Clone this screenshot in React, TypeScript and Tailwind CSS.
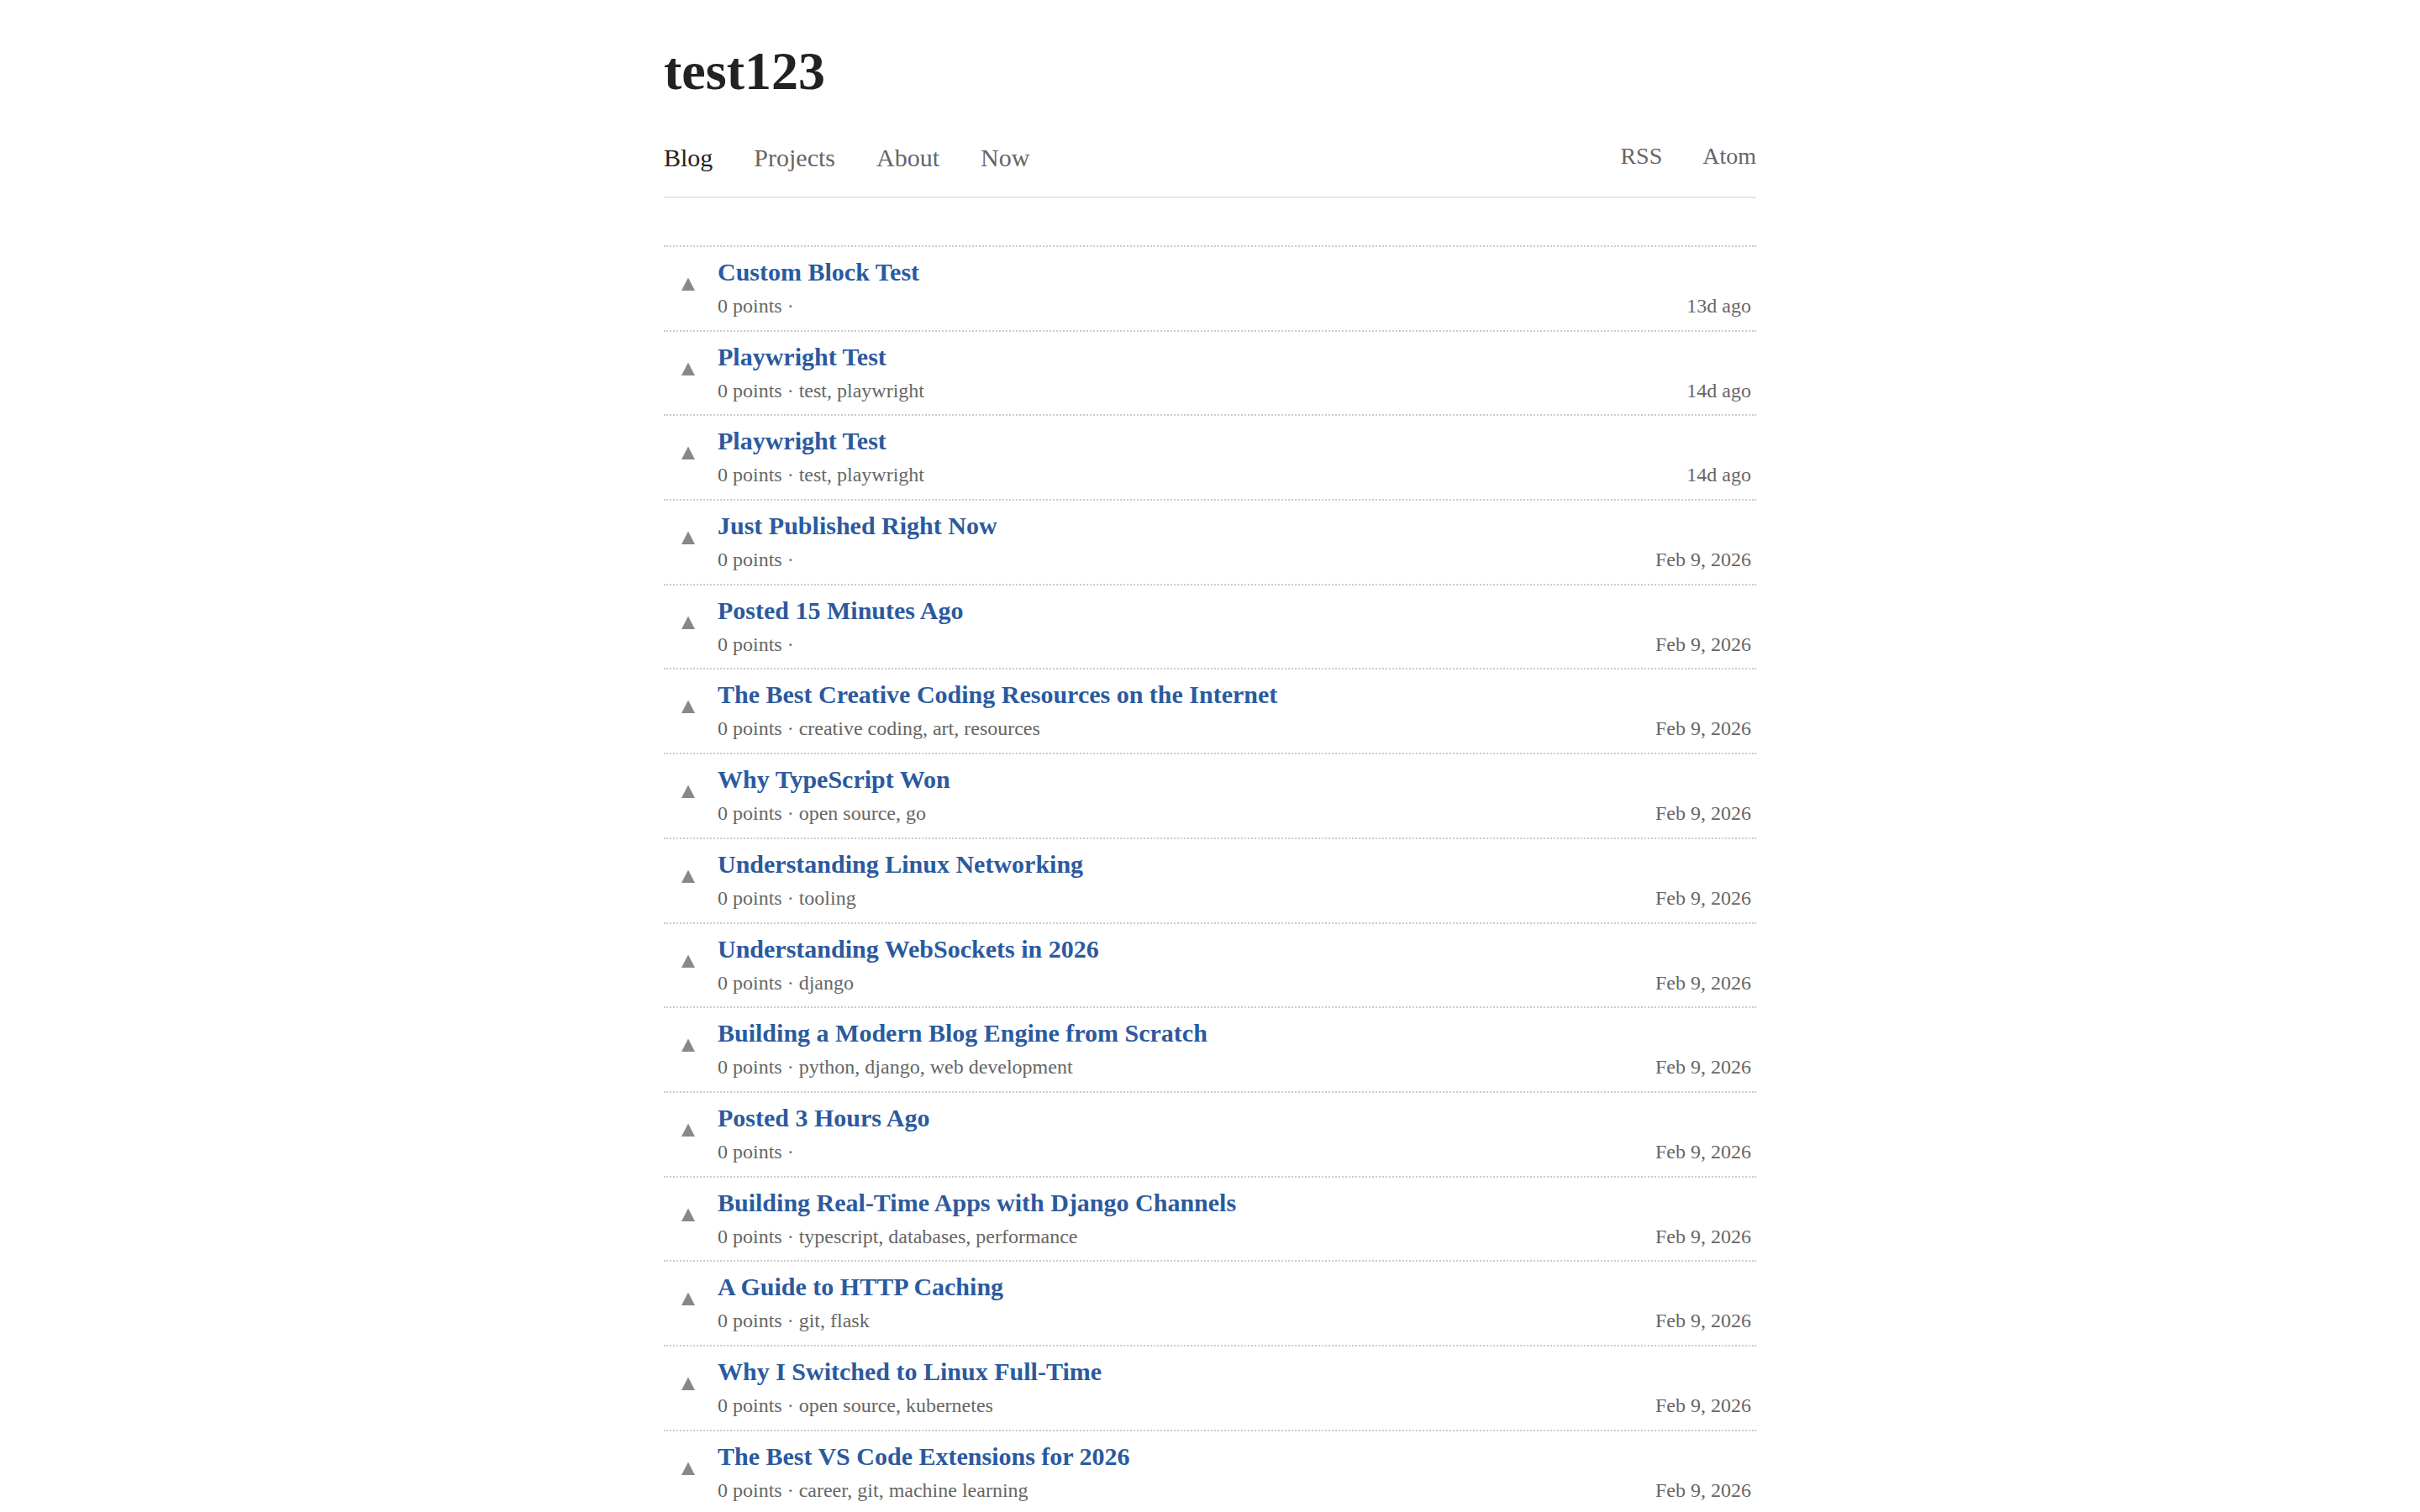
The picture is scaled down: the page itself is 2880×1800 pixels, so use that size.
type Post = {
  title: string;
  points: number;
  tags: string[];
  date: string;
};

const posts: Post[] = [
  { title: 'Custom Block Test', points: 0, tags: [], date: '13d ago' },
  { title: 'Playwright Test', points: 0, tags: ['test', 'playwright'], date: '14d ago' },
  { title: 'Playwright Test', points: 0, tags: ['test', 'playwright'], date: '14d ago' },
  { title: 'Just Published Right Now', points: 0, tags: [], date: 'Feb 9, 2026' },
  { title: 'Posted 15 Minutes Ago', points: 0, tags: [], date: 'Feb 9, 2026' },
  {
    title: 'The Best Creative Coding Resources on the Internet',
    points: 0,
    tags: ['creative coding', 'art', 'resources'],
    date: 'Feb 9, 2026',
  },
  { title: 'Why TypeScript Won', points: 0, tags: ['open source', 'go'], date: 'Feb 9, 2026' },
  { title: 'Understanding Linux Networking', points: 0, tags: ['tooling'], date: 'Feb 9, 2026' },
  { title: 'Understanding WebSockets in 2026', points: 0, tags: ['django'], date: 'Feb 9, 2026' },
  {
    title: 'Building a Modern Blog Engine from Scratch',
    points: 0,
    tags: ['python', 'django', 'web development'],
    date: 'Feb 9, 2026',
  },
  { title: 'Posted 3 Hours Ago', points: 0, tags: [], date: 'Feb 9, 2026' },
  {
    title: 'Building Real-Time Apps with Django Channels',
    points: 0,
    tags: ['typescript', 'databases', 'performance'],
    date: 'Feb 9, 2026',
  },
  { title: 'A Guide to HTTP Caching', points: 0, tags: ['git', 'flask'], date: 'Feb 9, 2026' },
  {
    title: 'Why I Switched to Linux Full-Time',
    points: 0,
    tags: ['open source', 'kubernetes'],
    date: 'Feb 9, 2026',
  },
  {
    title: 'The Best VS Code Extensions for 2026',
    points: 0,
    tags: ['career', 'git', 'machine learning'],
    date: 'Feb 9, 2026',
  },
];

function UpvoteArrow() {
  return (
    <svg className="w-[16px] h-[16px] block" viewBox="0 0 16 16" aria-hidden="true">
      <polygon points="8,0.5 16,16 0,16" fill="#888888" />
    </svg>
  );
}

function PostRow({ post }: { post: Post }) {
  return (
    <li className="flex border-b-2 border-dotted border-[#cccccc] pt-[9px] pb-[9.7px]">
      {/* Vote column */}
      <div className="w-[64px] shrink-0 pl-[21px] pt-[27px]">
        <button className="block" aria-label={`Upvote ${post.title}`}>
          <UpvoteArrow />
        </button>
      </div>

      <div className="flex-1 min-w-0">
        <a href="#" className="block text-[30px] leading-[42px] font-bold text-[#2b5a9e]">
          {post.title}
        </a>
        <div className="flex justify-between text-[24px] leading-[38px] text-[#666666]">
          <span>
            {post.points} points · {post.tags.join(', ')}
          </span>
          <span className="pr-[6px]">{post.date}</span>
        </div>
      </div>
    </li>
  );
}

export default function App() {
  return (
    <div className="min-h-screen bg-white font-['Liberation_Serif','Times_New_Roman',serif] text-[#222222]">
      <div className="w-[1300px] mx-auto pt-[47px] pb-[80px]">
        {/* Site header */}
        <h1 className="text-[64px] leading-[76px] font-bold text-[#222222]">test123</h1>

        <nav className="mt-[42px] flex items-start justify-between pb-[24px] border-b-2 border-[#e5e5e5]">
          <div className="flex items-start gap-[49px] text-[30px] leading-[45px]">
            <a href="#" className="text-[#222222]">Blog</a>
            <a href="#" className="text-[#666666]">Projects</a>
            <a href="#" className="text-[#666666]">About</a>
            <a href="#" className="text-[#666666]">Now</a>
          </div>
          <div className="flex items-start gap-[48px] text-[28px] leading-[42px] text-[#666666]">
            <a href="#">RSS</a>
            <a href="#">Atom</a>
          </div>
        </nav>

        {/* Post list */}
        <ul className="mt-[56px] border-t-2 border-dotted border-[#cccccc]">
          {posts.map((post, i) => (
            <PostRow key={i} post={post} />
          ))}
        </ul>
      </div>
    </div>
  );
}
